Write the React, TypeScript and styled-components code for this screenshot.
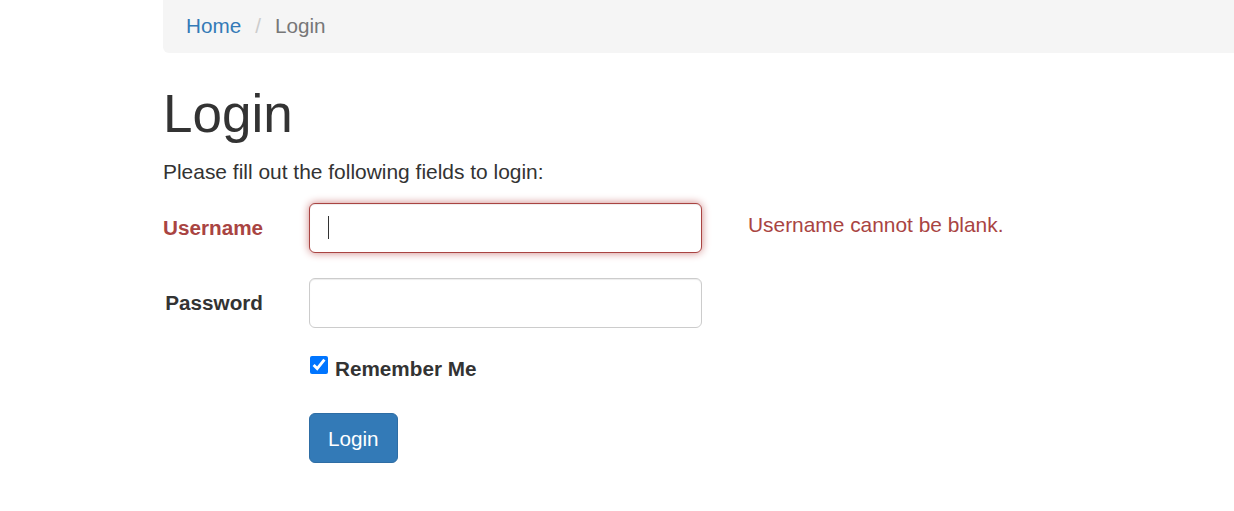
import React from "react";
import styled, { createGlobalStyle } from "styled-components";

const GlobalStyle = createGlobalStyle`
  html, body {
    margin: 0;
    padding: 0;
    background: #fff;
    overflow: hidden;
  }
  body {
    font-family: "Liberation Sans", Arial, Helvetica, sans-serif;
    font-size: 20.7px;
    line-height: 1.42857;
    color: #333;
  }
  * { box-sizing: border-box; }
`;

const Page = styled.div`
  padding-left: 163px;
  width: 1234px;
  overflow: hidden;
`;

const Breadcrumb = styled.ol`
  display: flex;
  align-items: center;
  list-style: none;
  margin: 0;
  padding: 0 0 1px 23px;
  height: 53px;
  width: 1100px;
  background: #f5f5f5;
  border-radius: 0 0 6px 6px;
`;

const Crumb = styled.li<{ $active?: boolean }>`
  color: ${(p) => (p.$active ? "#777" : "#337ab7")};
  a {
    color: #337ab7;
    text-decoration: none;
  }
`;

const Separator = styled.li`
  color: #ccc;
  margin: 0 14px;
`;

const Title = styled.h1`
  font-size: 53px;
  font-weight: 500;
  line-height: 1.1;
  margin: 31.5px 0 14px;
  color: #333;
`;

const Intro = styled.p`
  margin: 0 0 16px;
  font-size: 20.95px;
`;

const Form = styled.form`
  display: flex;
  flex-direction: column;
`;

const FormRow = styled.div<{ $gap: number }>`
  display: grid;
  grid-template-columns: 100px 393px auto;
  column-gap: 46px;
  align-items: center;
  margin-bottom: ${(p) => p.$gap}px;
`;

const Label = styled.label<{ $error?: boolean }>`
  text-align: right;
  font-weight: 700;
  color: ${(p) => (p.$error ? "#a94442" : "#333")};
`;

const InputWrap = styled.div<{ $caret?: boolean }>`
  position: relative;
  &::after {
    content: "";
    display: ${(p) => (p.$caret ? "block" : "none")};
    position: absolute;
    left: 19px;
    top: 13px;
    width: 1px;
    height: 23px;
    background: #333;
  }
`;

const TextInput = styled.input<{ $error?: boolean }>`
  display: block;
  width: 393px;
  height: 50px;
  padding: 9px 18px;
  font-family: inherit;
  font-size: 20.7px;
  color: #555;
  background: #fff;
  border: 1px solid ${(p) => (p.$error ? "#a94442" : "#ccc")};
  border-radius: 6px;
  outline: none;
  box-shadow: ${(p) =>
    p.$error
      ? "inset 0 1px 1px rgba(0,0,0,.075), 0 0 9px #ce8483"
      : "inset 0 1px 1px rgba(0,0,0,.075)"};
`;

const HelpBlock = styled.div`
  align-self: start;
  margin-top: 7px;
  font-size: 20.9px;
  color: #a94442;
`;

const CheckLabel = styled.label`
  grid-column: 2;
  display: flex;
  align-items: flex-start;
  font-weight: 700;
  color: #333;
`;

const CheckBox = styled.input`
  width: 18px;
  height: 18px;
  margin: 2px 7px 0 1px;
`;

const ButtonCell = styled.div`
  grid-column: 2;
`;

const PrimaryButton = styled.button`
  font-family: inherit;
  font-size: 20.7px;
  line-height: 1.42857;
  height: 50px;
  padding: 0 18px;
  color: #fff;
  background: #337ab7;
  border: 1px solid #2e6da4;
  border-radius: 6px;
  cursor: pointer;
`;

export default function App() {
  return (
    <>
      <GlobalStyle />
      <Page>
        <Breadcrumb>
          <Crumb>
            <a href="#">Home</a>
          </Crumb>
          <Separator>/</Separator>
          <Crumb $active>Login</Crumb>
        </Breadcrumb>
        <Title>Login</Title>
        <Intro>Please fill out the following fields to login:</Intro>
        <Form onSubmit={(e) => e.preventDefault()}>
          <FormRow $gap={25}>
            <Label $error htmlFor="username">Username</Label>
            <InputWrap $caret>
              <TextInput id="username" type="text" $error />
            </InputWrap>
            <HelpBlock>Username cannot be blank.</HelpBlock>
          </FormRow>
          <FormRow $gap={26}>
            <Label htmlFor="password">Password</Label>
            <InputWrap>
              <TextInput id="password" type="password" />
            </InputWrap>
          </FormRow>
          <FormRow $gap={30}>
            <CheckLabel>
              <CheckBox type="checkbox" defaultChecked />
              Remember Me
            </CheckLabel>
          </FormRow>
          <FormRow $gap={0}>
            <ButtonCell>
              <PrimaryButton type="submit">Login</PrimaryButton>
            </ButtonCell>
          </FormRow>
        </Form>
      </Page>
    </>
  );
}
